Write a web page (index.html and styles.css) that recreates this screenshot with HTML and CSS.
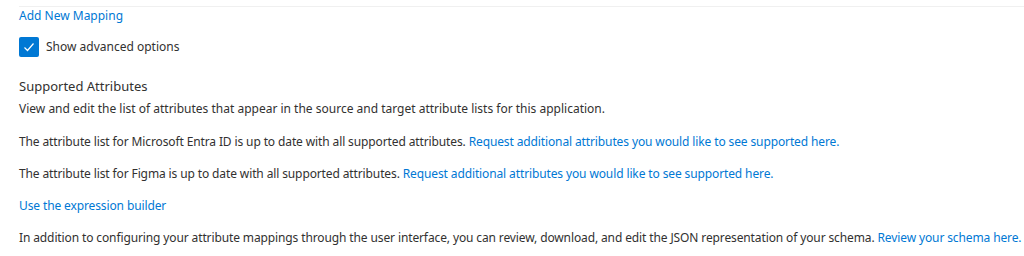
FILE: index.html
```html
<!DOCTYPE html>
<html lang="en">
<head>
    <meta charset="UTF-8">
    <title>Attribute Mapping</title>
    <link rel="stylesheet" href="styles.css">
</head>
<body>
    <div class="panel">
        <div class="divider"></div>

        <a class="link add-link" href="#">Add New Mapping</a>

        <label class="checkbox">
            <span class="box">
                <svg width="12" height="12" viewBox="0 0 12 12">
                    <path d="M1.5 6.5 L4.5 9.5 L10.5 2.5" fill="none" stroke="#fff" stroke-width="1.2"/>
                </svg>
            </span>
            Show advanced options
        </label>

        <div class="section">
            <h3 class="section-title">Supported Attributes</h3>
            <p class="desc">View and edit the list of attributes that appear in the source and target attribute lists for this application.</p>
            <p class="row">The attribute list for Microsoft Entra ID is up to date with all supported attributes. <a class="link" href="#">Request additional attributes you would like to see supported here.</a></p>
            <p class="row">The attribute list for Figma is up to date with all supported attributes. <a class="link" href="#">Request additional attributes you would like to see supported here.</a></p>
            <p class="row"><a class="link" href="#">Use the expression builder</a></p>
            <p class="row">In addition to configuring your attribute mappings through the user interface, you can review, download, and edit the JSON representation of your schema. <a class="link" href="#">Review your schema here.</a></p>
        </div>
    </div>
</body>
</html>
```

FILE: styles.css
```css
* {
    margin: 0;
    padding: 0;
    box-sizing: border-box;
}

body {
    font-family: 'Segoe UI', 'Noto Sans', 'Open Sans', sans-serif;
    font-size: 12px;
    color: #323130;
    background: #fff;
}

.panel {
    padding: 0 0 0 19px;
}

.divider {
    height: 1px;
    background: #f0f0f0;
    margin-top: 6px;
}

.link {
    color: #0078d4;
    text-decoration: none;
}

.add-link {
    display: block;
    line-height: 18px;
}

.checkbox {
    display: flex;
    align-items: center;
    gap: 7px;
    margin-top: 12px;
    line-height: 20px;
}

.checkbox .box {
    width: 20px;
    height: 20px;
    border-radius: 2px;
    background: #0078d4;
    display: flex;
    align-items: center;
    justify-content: center;
}

.section {
    margin-top: 19px;
}

.section-title {
    font-size: 13px;
    font-weight: 400;
    line-height: 20px;
}

.desc {
    line-height: 18px;
    margin-top: 4px;
}

.row {
    line-height: 18px;
    margin-top: 14px;
    white-space: nowrap;
    letter-spacing: -0.12px;
}

.desc + .row {
    margin-top: 15px;
}
```
